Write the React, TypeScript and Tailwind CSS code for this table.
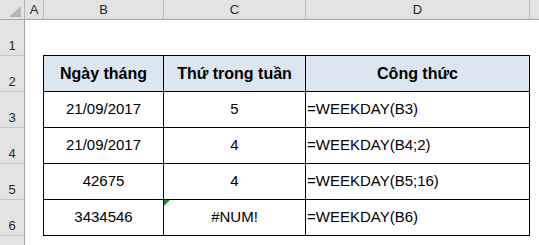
import React from 'react';

/**
 * Excel-like sheet showing WEEKDAY examples.
 * Column widths and row heights include their 1px right/bottom border.
 */
const cols = [
  { key: 'A', w: 'w-[19px]' },
  { key: 'B', w: 'w-[120px]' },
  { key: 'C', w: 'w-[142px]' },
  { key: 'D', w: 'w-[224px]' },
];

const rows = [
  { b: '21/09/2017', c: '5', d: '=WEEKDAY(B3)' },
  { b: '21/09/2017', c: '4', d: '=WEEKDAY(B4;2)' },
  { b: '42675', c: '4', d: '=WEEKDAY(B5;16)' },
  { b: '3434546', c: '#NUM!', d: '=WEEKDAY(B6)', flag: true },
];

const App: React.FC = () => {
  return (
    <div className="w-[539px] h-[245px] overflow-hidden bg-white font-['Liberation_Sans',Arial,sans-serif] text-[#1a1a1a]">
      {/* Column headers */}
      <div className="flex h-[20px] bg-[#e3e3e3] border-b border-[#a6a6a6]">
        <div className="w-[25px] shrink-0 border-r border-[#b4b4b4] flex justify-end items-end pr-[3px] pb-[2px]">
          <svg width="12" height="11" viewBox="0 0 12 11">
            <polygon points="12,0 12,11 0,11" fill="#b7b7b7" />
          </svg>
        </div>
        {cols.map((c) => (
          <div
            key={c.key}
            className={`${c.w} shrink-0 border-r border-[#bdbdbd] flex items-center justify-center text-[13px] leading-none text-[#262626]`}
          >
            {c.key}
          </div>
        ))}
        <div className="flex-1" />
      </div>

      <div className="flex">
        {/* Row headers (row 7 is only partly on screen, its number falls below the edge) */}
        <div className="w-[25px] shrink-0 bg-[#e3e3e3] border-r border-[#a6a6a6] flex flex-col">
          {[1, 2, 3, 4, 5, 6].map((n) => (
            <div
              key={n}
              className="h-[36px] shrink-0 border-b border-[#c4c4c4] flex items-end justify-center pb-[3px] text-[13px] leading-none text-[#262626]"
            >
              {n}
            </div>
          ))}
          <div className="h-[36px] shrink-0" />
        </div>

        {/* Sheet body */}
        <div className="pt-[35px] pl-[18px]">
          <div className="border-l border-t border-black">
            <div className="flex h-[36px] bg-[#dce6f1] text-[16px] font-bold text-black">
              <div className="w-[120px] border-r border-b border-black flex items-center justify-center">Ngày tháng</div>
              <div className="w-[142px] border-r border-b border-black flex items-center justify-center">Thứ trong tuần</div>
              <div className="w-[224px] border-r border-b border-black flex items-center justify-center">Công thức</div>
            </div>
            {rows.map((r, i) => (
              <div key={i} className="flex h-[36px] text-[15px] text-black">
                <div className="w-[120px] border-r border-b border-black flex items-center justify-center">{r.b}</div>
                <div className="relative w-[142px] border-r border-b border-black flex items-center justify-center">
                  {r.flag && (
                    <span className="absolute left-0 top-0 w-0 h-0 border-t-[6px] border-r-[6px] border-t-[#1f8a2a] border-r-transparent" />
                  )}
                  {r.c}
                </div>
                <div className="w-[224px] border-r border-b border-black flex items-center pl-[1px]">{r.d}</div>
              </div>
            ))}
          </div>
        </div>
      </div>
    </div>
  );
};

export default App;
